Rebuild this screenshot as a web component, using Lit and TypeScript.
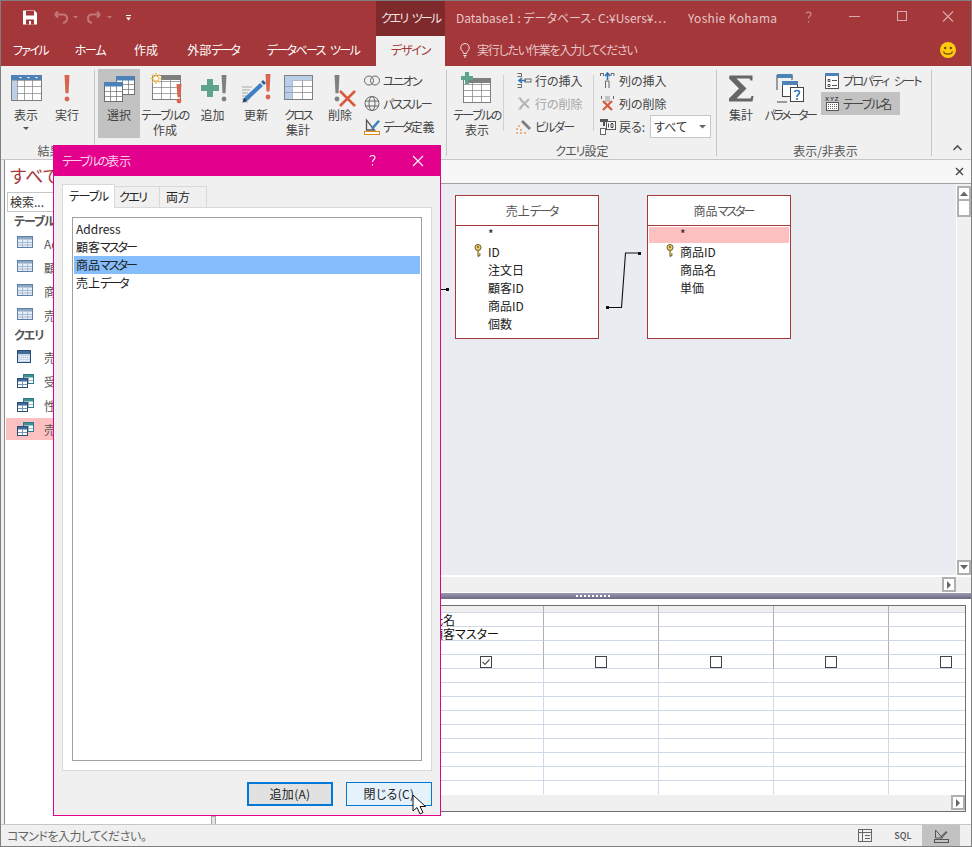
import { LitElement, html, css, svg } from "lit";
import { customElement } from "lit/decorators.js";

const GR = "#7f7f7f";
const ic = (x: number, y: number, w: number, h: number, body: unknown) =>
  html`<svg class="ic" width=${w} height=${h} viewBox="${x} ${y} ${w} ${h}">${body}</svg>`;

const grid = (x: number, y: number, w: number, h: number, cols: number[], rows: number[], stroke = GR) => svg`
  <rect x=${x + 0.5} y=${y + 0.5} width=${w} height=${h} fill="#fff" stroke=${stroke}/>
  ${cols.map((c) => svg`<path d="M${x + c + 0.5} ${y}v${h}" stroke=${stroke} stroke-opacity=".7" fill="none"/>`)}
  ${rows.map((r) => svg`<path d="M${x} ${y + r + 0.5}h${w}" stroke=${stroke} stroke-opacity=".7" fill="none"/>`)}`;

const bang = (x: number, y: number, h: number, c: string) => svg`
  <path d="M${x - 2.5} ${y}h5l-1 ${h * 0.7}h-3z" fill=${c}/><circle cx=${x} cy=${y + h - 2} r="2.4" fill=${c}/>`;

const queryIcon = svg`
  <rect x="6.5" y=".5" width="10" height="9" fill="#fff" stroke="#2e7c86"/><rect x="7" y="1" width="9" height="2.5" fill="#3f8f97"/>
  <path d="M11.5 3v6M7 6.5h9" stroke="#9cb4cb"/>
  <rect x=".5" y="4.5" width="10" height="9" fill="#fff" stroke="#2b4d73"/><rect x="1" y="5" width="9" height="2.5" fill="#3f6d98"/>
  <path d="M5.5 7v6M1 10.5h9" stroke="#7b97b8"/>`;

const k = (cls: string, t: string) => html`<span class=${cls}>${t}</span>`;

@customElement("app-root")
export class AppRoot extends LitElement {
  static styles = css`
    :host {
      display: block;
      width: 972px;
      height: 847px;
      font-family: "Noto Sans CJK JP", "Noto Sans", sans-serif;
      font-feature-settings: "palt";
      font-size: 12px;
      color: #444;
    }
    * { box-sizing: border-box; }
    .k05 { letter-spacing: -.5px; }
    .k10 { letter-spacing: -1px; }
    .k12 { letter-spacing: -1.2px; }
    .k14 { letter-spacing: -1.4px; }
    .k16 { letter-spacing: -1.6px; }
    .k20 { letter-spacing: -2px; }
    .k25 { letter-spacing: -2.5px; }
    .ws { word-spacing: 4px; }
    .ic { display: block; flex: none; overflow: visible; }
    .win {
      position: relative;
      width: 972px;
      height: 847px;
      border: 1px solid #7f7f7f;
      background: #f0f0f0;
      display: flex;
      flex-direction: column;
      overflow: hidden;
    }
    .title { height: 35px; background: #a4373a; display: flex; color: #e6c6c7; line-height: 33px; flex: none; }
    .qat { width: 375px; }
    .tooltab { width: 69px; background: #7e2a2c; text-align: center; line-height: 33px; color: #f3e4e4; }
    .doc { margin-left: 11px; width: 232px; white-space: nowrap; overflow: hidden; }
    .user { width: 112px; letter-spacing: .3px; }
    .tabs { height: 30px; background: #a4373a; display: flex; color: #fff; line-height: 28px; flex: none; }
    .tab { text-align: center; flex: none; }
    .t1 { width: 59px; } .t2 { width: 60px; } .t3 { width: 52px; } .t4 { width: 82px; } .t5 { width: 118px; }
    .gapt { width: 4px; }
    .t6 { width: 69px; background: #f0f0f0; color: #a4373a; }
    .hint { display: flex; align-items: center; margin-left: 14px; color: #e6c6c7; gap: 6px; flex: 1; padding-bottom: 2px; }
    .smile { margin-right: 14px; align-self: center; margin-bottom: 2px; }

    .ribbon { height: 94px; border-bottom: 1px solid #c6c6c6; padding-top: 3px; display: flex; flex: none; background: #f0f0f0; position: relative; }
    .group { display: flex; flex-direction: column; flex: none; }
    .gbody { height: 69px; display: flex; }
    .glabel { margin-top: 6px; height: 14px; line-height: 14px; text-align: center; color: #555; }
    .g1 { width: 93px; padding-left: 4px; }
    .g2 { width: 351px; padding-left: 3px; }
    .g3 { width: 269px; padding-left: 4px; }
    .g3 .glabel { padding-right: 3px; }
    .g4 { width: 214px; padding-left: 3px; }
    .sep { width: 1px; background: #c6c6c6; margin: 1px 0 3px; flex: none; }
    .isep { width: 1px; background: #d0d0d0; height: 56px; margin-top: 6px; flex: none; }
    .lg { padding-top: 4px; text-align: center; line-height: 15px; flex: none; display: flex; flex-direction: column; align-items: center; }
    .lg > span { margin-top: 2px; display: block; white-space: nowrap; }
    .caret { display: block; margin: 5px auto 0; }
    .on { background: #c2c2c2; }
    .w40 { width: 40px; } .w42 { width: 42px; } .w45 { width: 45px; } .w50 { width: 50px; } .w52 { width: 52px; } .w56 { width: 56px; }
    .col { display: flex; flex-direction: column; flex: none; }
    .c1 { width: 84px; padding-left: 3px; }
    .c2 { width: 84px; margin-left: 5px; padding-left: 7px; }
    .c3 { padding-left: 6px; width: 122px; }
    .c4 { margin-left: 3px; width: 110px; }
    .row { height: 23px; display: flex; align-items: center; gap: 3px; white-space: nowrap; flex: none; }
    .c4 .row { padding-left: 4px; gap: 2px; }
    .c4 .row.on { width: 79px; }
    .dis { color: #a6a6a6; }
    .combo { width: 61px; height: 23px; margin-left: 2px; background: #fff; border: 1px solid #c6c6c6; display: flex; align-items: center; justify-content: space-between; padding: 0 4px 0 3px; color: #333; }
    .collapse { position: absolute; left: 950px; top: 78px; }

    .main { flex: 1; display: flex; min-height: 0; background: #fff; }
    .gutter { width: 3px; background: #f0f0f0; flex: none; }
    .nav { width: 207px; border-left: 1px solid #8a8a8a; background: #fff; flex: none; overflow: hidden; }
    .navh { height: 30px; padding-left: 5px; font-size: 18px; line-height: 30px; color: #a4373a; white-space: nowrap; }
    .search { margin: 2px 0 0 2px; height: 20px; width: 190px; border: 1px solid #c6c6c6; line-height: 18px; padding-left: 2px; color: #333; }
    .navg { font-weight: 700; color: #555; height: 18px; line-height: 18px; padding-left: 9px; white-space: nowrap; }
    .navi { display: flex; align-items: center; gap: 11px; height: 22px; margin: 2px 0 0 1px; padding-left: 11px; color: #555; }
    .navi.sel { background: #fcc0c0; }
    .split { width: 6px; background: #fff; flex: none; display: flex; align-items: flex-end; }
    .split i { display: block; width: 5px; height: 8px; background: #e4e4e4; border: 1px solid #a8a8a8; border-bottom: 0; }
    .pane { flex: 1; display: flex; flex-direction: column; min-width: 0; background: #fff; }
    .strip { height: 24px; background: #f7f7f7; border-bottom: 1px solid #a0a0a0; display: flex; justify-content: flex-end; align-items: center; padding-right: 7px; flex: none; }
    .upper { height: 391px; display: flex; flex: none; }
    .canvas { position: relative; width: 739px; background: #e9edf1; flex: none; }
    .vbar { width: 14px; margin-left: 1px; display: flex; flex-direction: column; background: #f0f0f0; flex: none; padding-top: 2px; }
    .sbtn { width: 14px; height: 15px; border: 2px solid #b0b0b0; background: #fff; display: flex; align-items: center; justify-content: center; flex: none; }
    .thumb { height: 16px; border: 2px solid #b0b0b0; border-top: 0; background: #fff; flex: none; }
    .vfill { flex: 1; }
    .hbar { height: 15px; margin-top: 2px; display: flex; justify-content: flex-end; background: #f0f0f0; flex: none; padding-right: 15px; }
    .sash { height: 6px; margin-top: 1px; background: linear-gradient(#9b9bb4, #6b6b85); display: flex; justify-content: center; align-items: center; flex: none; }
    .sash svg { display: block; }
    .qgrid { margin: 6px 5px 0 0; height: 207px; border-top: 1px solid #6d6d6d; border-bottom: 1px solid #6d6d6d; border-right: 1px solid #6d6d6d; display: flex; flex-direction: column; flex: none; overflow: hidden; }
    .qrow { display: flex; height: 14px; flex: none; }
    .qrow.qhead { height: 7px; }
    .qc { width: 115px; flex: none; border-right: 1px solid #cfdbe8; border-bottom: 1px solid #cfd8e6; line-height: 14px; padding-left: 2px; color: #111; white-space: nowrap; display: flex; align-items: center; }
    .qc.first { width: 212px; }
    .qc.dark { border-right-color: #b0b0b0; }
    .qc.nb { border-bottom-color: transparent; }
    .qhead .qc { background: #f0eeee; }
    .qc.mid { justify-content: center; padding: 0; }
    .box { width: 12px; height: 12px; border: 1px solid #444; background: #fff; display: flex; flex: none; }
    .qscroll { height: 16px; background: #f0f0f0; display: flex; justify-content: flex-end; flex: none; }
    .qscroll .sbtn { height: 15px; }

    .status { height: 22px; background: #f0f0f0; border-top: 1px solid #c6c6c6; display: flex; align-items: center; padding-left: 6px; color: #666; flex: none; position: relative; }
    .sview { margin-left: auto; display: flex; height: 21px; margin-right: 11px; align-items: center; }
    .sv { width: 38px; height: 21px; display: flex; align-items: center; justify-content: center; font-size: 9px; color: #555; font-weight: 500; }

    .tbl { position: absolute; top: 11px; width: 144px; height: 144px; background: #fff; border: 1px solid #a4373a; color: #222; }
    .tbl1 { left: 238px; } .tbl2 { left: 430px; }
    .tblh { height: 30px; border-bottom: 1px solid #a4373a; line-height: 29px; text-align: center; color: #555; padding-left: 9px; }
    .fld { height: 18px; line-height: 18px; padding-left: 32px; position: relative; white-space: nowrap; }
    .fld.star { height: 16px; line-height: 14px; margin: 1px 0 0; }
    .fld.star.hl { background: #fcc0c0; margin: 1px 1px 0; padding-left: 31px; }
    .key { position: absolute; left: 18px; top: 1px; }
    .wires { position: absolute; left: 0; top: 0; pointer-events: none; }

    .dlg { position: absolute; left: 52px; top: 144px; width: 388px; height: 671px; background: #f0f0f0; border: 1px solid #e3008c; border-top: 0; display: flex; flex-direction: column; }
    .dtitle { height: 31px; background: #e3008c; color: #f8d0e8; display: flex; align-items: center; padding-left: 8px; flex: none; justify-content: space-between; }
    .dtabs { display: flex; margin: 8px 0 0 8px; height: 23px; align-items: flex-end; position: relative; z-index: 1; flex: none; }
    .dt { height: 21px; width: 46px; border: 1px solid #d9d9d9; border-left: 0; border-bottom: 0; background: #f0f0f0; line-height: 20px; color: #222; }
    .dt.p4 { padding-left: 4px; width: 45px; }
    .dt.p7 { padding-left: 6px; width: 47px; }
    .dt.act { height: 24px; width: 53px; border: 1px solid #d9d9d9; border-bottom: 0; background: #fff; margin-bottom: -1px; line-height: 22px; text-align: center; }
    .dpanel { margin-left: 8px; width: 370px; height: 564px; background: #fff; border: 1px solid #d9d9d9; padding: 9px; flex: none; }
    .list { height: 544px; border: 1px solid #a0a0a0; padding: 2px 1px; color: #222; }
    .li { height: 18px; line-height: 18px; padding-left: 2px; }
    .li.sel { background: #85bdfd; }
    .dbtns { display: flex; justify-content: flex-end; gap: 13px; margin: 11px 8px 0 0; flex: none; }
    .btn { width: 86px; height: 24px; text-align: center; line-height: 22px; color: #222; letter-spacing: .3px; }
    .btn.def { background: #e1e1e1; border: 2px solid #0078d7; line-height: 20px; }
    .btn.hov { background: #e5f1fb; border: 1px solid #0078d7; }
    .cursor { position: absolute; left: 411px; top: 793px; }
  `;

  private large(cls: string, icon: unknown, text: unknown, on = false) {
    return html`<div class="lg ${cls} ${on ? "on" : ""}">${icon}<span>${text}</span></div>`;
  }

  private titleBar() {
    return html`<div class="title">
      <div class="qat">${ic(1, 1, 375, 35, svg`
        <path d="M23 10.5h11.5l2.5 2.5v11.5h-14z" fill="#fff"/>
        <rect x="26" y="11" width="8" height="4.5" fill="#a4373a"/><rect x="26" y="19.5" width="8" height="5" fill="#a4373a"/><rect x="29" y="21" width="2" height="3.5" fill="#fff"/>
        <path d="M55 14.5h8c3 0 4 2 4 4s-1.5 4-4 4.5M55 14.5l3-3M55 14.5l3 3" fill="none" stroke="#c1777a" stroke-width="2"/>
        <path d="M73 16l2.5 2.5 2.5-2.5z" fill="#c1777a"/>
        <path d="M100 14.5h-8c-3 0-4 2-4 4s1.5 4 4 4.5M100 14.5l-3-3M100 14.5l-3 3" fill="none" stroke="#c1777a" stroke-width="2"/>
        <path d="M107 16l2.5 2.5 2.5-2.5z" fill="#c1777a"/>
        <path d="M126 15h5v1h-5zM126 17.5h5l-2.5 3z" fill="#fff"/>`)}</div>
      <div class="tooltab">${k("k20 ws", "クエリ ツール")}</div>
      <div class="doc">Database1 : データベース- C:¥Users¥⋯</div>
      <div class="user">Yoshie Kohama</div>
      ${ic(800, 1, 171, 35, svg`
        <path d="M806 13.5c.5-2 5-2 5 .5 0 2-2.5 2-2.5 4.5M808.5 21v1.5" fill="none" stroke="#c98d8f" stroke-width="1.2"/>
        <path d="M849 16.5h11" stroke="#d9aaab" fill="none"/>
        <rect x="897.5" y="11.5" width="9" height="9" fill="none" stroke="#d9aaab"/>
        <path d="M943 11.5l10 10M953 11.5l-10 10" stroke="#d9aaab" fill="none" stroke-width="1.1"/>`)}
    </div>`;
  }

  private tabBar() {
    return html`<div class="tabs">
      <div class="tab t1">${k("k16", "ファイル")}</div><div class="tab t2">${k("k12", "ホーム")}</div><div class="tab t3">作成</div>
      <div class="tab t4">外部${k("k20", "データ")}</div><div class="tab t5">${k("k16 ws", "データベース ツール")}</div><div class="gapt"></div>
      <div class="tab t6">${k("k12", "デザイン")}</div>
      <div class="hint">
        ${ic(0, 0, 12, 16, svg`<path d="M6 1.5a4.3 4.3 0 0 0-2.5 7.8c.6.6.8 1.2.8 2.2h3.4c0-1 .2-1.6.8-2.2A4.3 4.3 0 0 0 6 1.5zM4.5 13.5h3M5 15h2" fill="none" stroke="#f4e3e3"/>`)}
        <span class="k12">実行したい作業を入力してください</span>
      </div>
      <div class="smile">${ic(0, 0, 18, 18, svg`<circle cx="9" cy="9" r="8" fill="#ffc90e"/><circle cx="6.2" cy="7" r="1.2" fill="#6b4a00"/><circle cx="11.8" cy="7" r="1.2" fill="#6b4a00"/><path d="M4.5 10.5c1 3.5 8 3.5 9 0" fill="none" stroke="#6b4a00" stroke-width="1.1"/>`)}</div>
    </div>`;
  }

  private ribbon() {
    const I = (x: number, w: number, b: unknown) => ic(x, 73, w, 32, b);
    const s = (x: number, y: number, b: unknown) => ic(x, y, 16, 16, b);
    return html`<div class="ribbon">
      <div class="group g1">
        <div class="gbody">
          ${this.large("w42", I(5, 42, svg`${grid(11, 75, 30, 25, [6, 13, 21], [5, 11, 18])}
            <rect x="12" y="81" width="5" height="19" fill="#bdd0e9"/><rect x="11" y="75" width="30.5" height="5" fill="#4d82b8"/>
            <path d="M19 77h3l-1.5 1.5zM27 77h3l-1.5 1.5zM35 77h3l-1.5 1.5z" fill="#fff"/>`),
            html`表示<svg class="caret" width="6" height="4"><path d="M0 0h6l-3 3z" fill="#555"/></svg>`)}
          ${this.large("w40", I(47, 40, bang(67, 75, 26, "#d8654f")), "実行")}
        </div>
        <div class="glabel">結果</div>
      </div>
      <div class="sep"></div>
      <div class="group g2">
        <div class="gbody">
          ${this.large("w42", I(98, 42, svg`${grid(116, 76, 18, 18, [6, 12], [8, 13], "#6f6f6f")}<rect x="116" y="76" width="18.5" height="4.5" fill="#4d82b8"/>
            ${grid(104, 82, 18, 19, [6, 12], [9, 14], "#6f6f6f")}<rect x="104" y="82" width="18.5" height="4.5" fill="#4d82b8"/>`), "選択", true)}
          ${this.large("w50", I(140, 50, svg`${grid(152, 75, 28, 24, [9, 18], [6, 12, 18])}<rect x="161" y="75" width="19.5" height="5" fill="#7f7f7f"/>
            <path d="M156 73v11M150.5 78.5h11M152 74.5l8 8M160 74.5l-8 8" stroke="#f2c36b" stroke-width="1.6" fill="none"/><circle cx="156" cy="78.5" r="2.5" fill="#fff" stroke="#f2c36b"/>
            ${bang(179, 84, 19, "#d8654f")}`), html`${k("k16", "テーブルの")}<br />作成`)}
          ${this.large("w45", I(190, 45, svg`<path d="M207 79h6v6h6v6h-6v6h-6v-6h-6v-6h6z" fill="#5fa58c"/>${bang(224, 75, 26, "#7f7f7f")}`), "追加")}
          ${this.large("w42", I(235, 42, svg`<path d="M242 87h10M242 90h8M242 93h6M242 96h5M242 99h8M242 102h6" stroke="#a8a8a8" fill="none"/>
            <path d="M244 98l16-15 3 3-16 15-4.5 1.5z" fill="#3f7fc3"/><path d="M261 82l2-2 3 3-2 2z" fill="#2b5f9e"/><path d="M243 102l1-4 3 3z" fill="#234"/>
            ${bang(268, 74, 25, "#d8654f")}`), "更新")}
          ${this.large("w42", I(277, 42, svg`${grid(284, 75, 28, 24, [8, 18], [5, 11, 17])}<rect x="285" y="76" width="27" height="4.5" fill="#b9cfe8"/><rect x="285" y="76" width="7.5" height="23" fill="#b9cfe8"/>
            <path d="M285 86.5h7M285 92.5h7" stroke="#8ea6c2"/>`), html`${k("k20", "クロス")}<br />集計`)}
          ${this.large("w42", I(319, 42, svg`${bang(337, 75, 26, "#7f7f7f")}<path d="M340 91l15 15M355 91l-15 15" stroke="#d9583f" stroke-width="2.6" fill="none"/>`), "削除")}
          <div class="col c1">
            <div class="row">${s(364, 73, svg`<circle cx="369" cy="80.5" r="4.5" fill="none" stroke="#666"/><circle cx="375" cy="80.5" r="4.5" fill="none" stroke="#666"/>`)}<span class="k16">ユニオン</span></div>
            <div class="row">${s(364, 96, svg`<circle cx="372" cy="103.5" r="7" fill="none" stroke="#666"/><ellipse cx="372" cy="103.5" rx="3" ry="7" fill="none" stroke="#666"/><path d="M365 101h14M365 106h14" stroke="#666" fill="none"/>`)}<span class="k16">パススルー</span></div>
            <div class="row">${s(364, 118, svg`<path d="M366.5 119v10h8z" fill="none" stroke="#555" stroke-width="1.3"/><path d="M371 127l7-8 2 1.5-7 8z" fill="#3f7fc3"/><rect x="364.5" y="130.5" width="15" height="3" fill="#fff" stroke="#e08a1e"/>`)}<span>${k("k20", "データ")}定義</span></div>
          </div>
        </div>
        <div class="glabel"></div>
      </div>
      <div class="sep"></div>
      <div class="group g3">
        <div class="gbody">
          ${this.large("w52", I(451, 52, svg`${grid(463, 78, 27, 24, [9, 18], [6, 12, 18])}<rect x="469" y="78" width="21.5" height="5" fill="#7f7f7f"/>
            <path d="M465 72h4v4h4v4h-4v4h-4v-4h-4v-4h4z" fill="#5fa58c"/>`), html`${k("k16", "テーブルの")}<br />表示`)}
          <div class="isep"></div>
          <div class="col c2">
            <div class="row">${s(516, 73, svg`<path d="M517.5 73.5h4M517.5 76.5h4v-3M517.5 84.5h4v3h-4" fill="none" stroke="#666"/><path d="M526 80.5h-7M522 78l-3 2.5 3 2.5" fill="none" stroke="#2e74b8" stroke-width="1.6"/><rect x="525" y="79" width="6" height="3" fill="none" stroke="#666"/>`)}<span>行の挿入</span></div>
            <div class="row dis">${s(516, 96, svg`<path d="M518 98h3v3M518 109h3v-3" fill="none" stroke="#b0b0b0"/><path d="M520 99l9 9M529 99l-9 9" stroke="#b5b5b5" stroke-width="2" fill="none"/>`)}<span>行の削除</span></div>
            <div class="row">${s(516, 119, svg`<path d="M523 120l8 8-2 2-8-8z" fill="#7f7f7f"/><path d="M518 126h2M516 129h2M520 130h2M516 133h2M520 133h2M524 133h2" stroke="#e0782a" fill="none"/>`)}<span class="k16">ビルダー</span></div>
          </div>
          <div class="isep"></div>
          <div class="col c3">
            <div class="row">${s(600, 73, svg`<path d="M600.5 76v-2.5h3v2.5M611 76v-2.5h3v2.5M605.5 88v-7h3.5v7" fill="none" stroke="#666"/><path d="M607.5 80v-6M605 76l2.5-3 2.5 3" fill="none" stroke="#2e74b8" stroke-width="1.6"/>`)}<span>列の挿入</span></div>
            <div class="row">${s(600, 96, svg`<rect x="605" y="96" width="5" height="6" fill="#c4c4c4"/><path d="M601.5 96v3M613.5 96v3" stroke="#666" fill="none"/><path d="M603 101l9 9M612 101l-9 9" stroke="#d9583f" stroke-width="2.2" fill="none"/>`)}<span>列の削除</span></div>
            <div class="row">
              ${s(600, 118, svg`<path d="M600 118h8v3h-3v4h-2v-4h-3z" fill="#555"/><rect x="606.5" y="120.5" width="9" height="8" fill="#fff" stroke="#555"/><rect x="600.5" y="127.5" width="5" height="6" fill="#fff" stroke="#666"/><path d="M608.5 122.5v4M611 122.5h2v4h-2z" stroke="#333" stroke-width=".9" fill="none"/>`)}
              <span>戻る:</span>
              <div class="combo"><span>すべて</span><svg width="7" height="4"><path d="M0 0h7l-3.5 3.5z" fill="#666"/></svg></div>
            </div>
          </div>
        </div>
        <div class="glabel">${k("k10", "クエリ")}設定</div>
      </div>
      <div class="sep"></div>
      <div class="group g4">
        <div class="gbody">
          ${this.large("w42", I(720, 42, svg`<path d="M729.5 75.5h23v5h-2l-1-2h-13l10 10-10 10h14l1-2.5h2l-1 5.5h-23.5v-3l10-10-10-10z" fill="#666"/>`), "集計")}
          ${this.large("w56", I(762, 56, svg`
            <path d="M777 90v-15h15v5M787 102h-10" fill="none" stroke="#444"/><rect x="777" y="74" width="15.5" height="4" fill="#4d82b8"/>
            <rect x="782.5" y="81.5" width="15" height="15" fill="#fff" stroke="#444"/><rect x="782" y="81" width="16" height="4" fill="#4d82b8"/>
            <rect x="790.5" y="87.5" width="13" height="14" fill="#fff" stroke="#444"/>
            <path d="M794.5 92c.5-2 5-2 5 .5 0 2-2.5 2-2.5 4.5M797 98v2" fill="none" stroke="#2e74b8" stroke-width="1.6"/>`), k("k25", "パラメーター"))}
          <div class="col c4">
            <div class="row">${s(825, 72, svg`<rect x="825.5" y="72.5" width="13" height="15" fill="#fff" stroke="#555"/><rect x="825" y="72" width="14" height="3" fill="#4d82b8"/><path d="M828 78.5h2v2h-2zM828 83.5h2v2h-2zM832 79.5h5M832 84.5h5" fill="none" stroke="#555"/>`)}<span class="k16 ws">プロパティ シート</span></div>
            <div class="row on">${s(825, 95, svg`<text x="825" y="100" font-size="6" font-weight="700" fill="#444" letter-spacing=".9" font-family="Liberation Sans">XYZ</text><rect x="826.5" y="101.5" width="12" height="8" fill="#fff" stroke="#555"/><path d="M828 103.5h9M828 105.5h9M828 107.5h9" stroke="#666" stroke-dasharray="1 1" fill="none"/>`)}<span>${k("k16", "テーブル")}名</span></div>
          </div>
        </div>
        <div class="glabel">表示/非表示</div>
      </div>
      <div class="sep"></div>
      <svg class="collapse" width="14" height="8"><path d="M2.5 6l4-4 4 4" fill="none" stroke="#555" stroke-width="1.6"/></svg>
    </div>`;
  }

  private nav() {
    const t = svg`<rect x=".5" y=".5" width="15" height="11" fill="#e9eff7" stroke="#5b7fa8"/><rect x="1" y="1" width="14" height="2.5" fill="#8fa7c6"/><path d="M5.5 3v8M10.5 3v8M1 6.5h14M1 9h14" stroke="#a9bbd2"/>`;
    const sql = svg`<rect x=".5" y=".5" width="13" height="12" fill="#c9d7ea" stroke="#2b4d73"/><rect x="1" y="1" width="12" height="3" fill="#3f6d98"/><path d="M3 6.5h9M3 8.5h9M3 10.5h9" stroke="#fff" stroke-dasharray="1 1"/>`;
    const it = (i: unknown, label: string, sel = false) =>
      html`<div class="navi ${sel ? "sel" : ""}">${ic(0, 0, 16, 14, i)}<span>${label}</span></div>`;
    return html`<div class="nav">
      <div class="navh">すべての Access...</div>
      <div class="search">検索...</div>
      <div class="navg k10">テーブル</div>
      ${it(t, "Address")}${it(t, "顧客マスター")}${it(t, "商品マスター")}${it(t, "売上データ")}
      <div class="navg k10">クエリ</div>
      ${it(sql, "売上クエリ")}${it(queryIcon, "受注クエリ")}${it(queryIcon, "性別クエリ")}${it(queryIcon, "売上クエリ2", true)}
    </div>`;
  }

  private table(cls: string, titleK: string, titleKana: string, fields: string[], hl = false) {
    const key = svg`<circle cx="4" cy="3.5" r="3" fill="#e7cf6e" stroke="#6b5a20"/><path d="M4 6.5v6l2-1v-2" fill="#e7cf6e" stroke="#6b5a20"/><circle cx="4" cy="3" r=".9" fill="#6b5a20"/>`;
    return html`<div class="tbl ${cls}">
      <div class="tblh">${titleK}${k("k20", titleKana)}</div>
      <div class="fld star ${hl ? "hl" : ""}">*</div>
      ${fields.map((f, i) => html`<div class="fld">${i === 0 ? html`<span class="key">${ic(0, 0, 9, 14, key)}</span>` : ""}${f}</div>`)}
    </div>`;
  }

  private diagram() {
    return html`<div class="canvas">
      ${this.table("tbl1", "売上", "データ", ["ID", "注文日", "顧客ID", "商品ID", "個数"])}
      ${this.table("tbl2", "商品", "マスター", ["商品ID", "商品名", "単価"], true)}
      <svg class="wires" width="739" height="391" viewBox="217 184 739 391">
        <path d="M441 289.5h6M606 307.5h15.5l4-54.5h14" fill="none" stroke="#111" stroke-width="1.1"/>
        <rect x="446" y="288" width="3" height="3" fill="#111"/><rect x="606" y="306" width="3" height="3" fill="#111"/><rect x="638" y="252" width="3" height="3" fill="#111"/>
      </svg>
    </div>`;
  }

  private qgrid() {
    const rows = Array.from({ length: 13 }, (_, i) => i);
    const cols = [1, 2, 3, 4, 5];
    return html`<div class="qgrid">
      <div class="qrow qhead"><div class="qc first"></div>${cols.map(() => html`<div class="qc dark"></div>`)}</div>
      ${rows.map((r) => html`<div class="qrow">
        <div class="qc first"></div>
        ${cols.map((c) => {
          const dark = r < 4 ? "dark" : "";
          const nb = r === 12 ? "nb" : "";
          if (r === 0 && c === 1) return html`<div class="qc ${dark}">氏名</div>`;
          if (r === 1 && c === 1) return html`<div class="qc ${dark}">顧客マスター</div>`;
          if (r === 3)
            return html`<div class="qc mid ${dark}"><div class="box">${c === 1
              ? html`<svg width="10" height="10"><path d="M1.5 5l2.5 2.5 4.5-5" fill="none" stroke="#555" stroke-width="1.2"/></svg>`
              : ""}</div></div>`;
          return html`<div class="qc ${dark} ${nb}"></div>`;
        })}
      </div>`)}
      <div class="qscroll"><div class="sbtn">${ic(0, 0, 6, 8, svg`<path d="M1 0l4 4-4 4z" fill="#666"/>`)}</div></div>
    </div>`;
  }

  private pane() {
    const dots = Array.from({ length: 9 }, (_, i) => i * 4);
    return html`<div class="pane">
      <div class="strip">${ic(0, 0, 9, 9, svg`<path d="M1 1l7 7M8 1l-7 7" stroke="#444" stroke-width="1.4" fill="none"/>`)}</div>
      <div class="upper">
        ${this.diagram()}
        <div class="vbar">
          <div class="sbtn">${ic(0, 0, 8, 5, svg`<path d="M0 5l4-4.5 4 4.5z" fill="#666"/>`)}</div>
          <div class="thumb"></div>
          <div class="vfill"></div>
          <div class="sbtn">${ic(0, 0, 8, 5, svg`<path d="M0 0l4 4.5 4-4.5z" fill="#666"/>`)}</div>
        </div>
      </div>
      <div class="hbar"><div class="sbtn">${ic(0, 0, 6, 8, svg`<path d="M1 0l4 4-4 4z" fill="#666"/>`)}</div></div>
      <div class="sash"><svg width="36" height="3">${dots.map((x) => svg`<rect x=${x} y="0" width="2" height="2" fill="#fff"/>`)}</svg></div>
      ${this.qgrid()}
    </div>`;
  }

  private status() {
    return html`<div class="status">
      <span class="k05">コマンドを入力してください。</span>
      <div class="sview">
        <div class="sv">${ic(0, 0, 14, 13, svg`<rect x=".5" y=".5" width="13" height="12" fill="none" stroke="#666"/><path d="M.5 3.5h13M4.5 .5v12M7 6.5h5M7 9.5h5" stroke="#666" fill="none"/>`)}</div>
        <div class="sv">SQL</div>
        <div class="sv on">${ic(0, 0, 15, 14, svg`<path d="M1.5 1v8h7z" fill="none" stroke="#555"/><path d="M6 8l6-6 1.5 1.5-6 6z" fill="#666"/><rect x=".5" y="10.5" width="14" height="3" fill="none" stroke="#555"/>`)}</div>
      </div>
    </div>`;
  }

  private dialog() {
    return html`<div class="dlg">
      <div class="dtitle">
        <span>${k("k20", "テーブルの")}表示</span>
        ${ic(0, 0, 76, 31, svg`<path d="M6 12c.5-2 5-2 5 .5 0 2-2.5 2-2.5 4.5M8.5 19v1.5" fill="none" stroke="#fff" stroke-width="1.1"/><path d="M49 11l10 10M59 11l-10 10" stroke="#fff" stroke-width="1.1" fill="none"/>`)}
      </div>
      <div class="dtabs"><div class="dt act k12">テーブル</div><div class="dt p4 k16">クエリ</div><div class="dt p7">両方</div></div>
      <div class="dpanel"><div class="list">
        <div class="li">Address</div>
        <div class="li">顧客${k("k20", "マスター")}</div>
        <div class="li sel">商品${k("k20", "マスター")}</div>
        <div class="li">売上${k("k20", "データ")}</div>
      </div></div>
      <div class="dbtns"><div class="btn def">追加(A)</div><div class="btn hov">閉じる(C)</div></div>
    </div>`;
  }

  render() {
    return html`<div class="win">
      ${this.titleBar()}${this.tabBar()}${this.ribbon()}
      <div class="main">
        <div class="gutter"></div>
        ${this.nav()}
        <div class="split"><i></i></div>
        ${this.pane()}
      </div>
      ${this.status()}
      ${this.dialog()}
      <svg class="cursor" width="20" height="24"><path d="M1 1v16l4-3.5 3 6.5 3-1.5-3-6h5.5z" fill="#fff" stroke="#111"/></svg>
    </div>`;
  }
}
